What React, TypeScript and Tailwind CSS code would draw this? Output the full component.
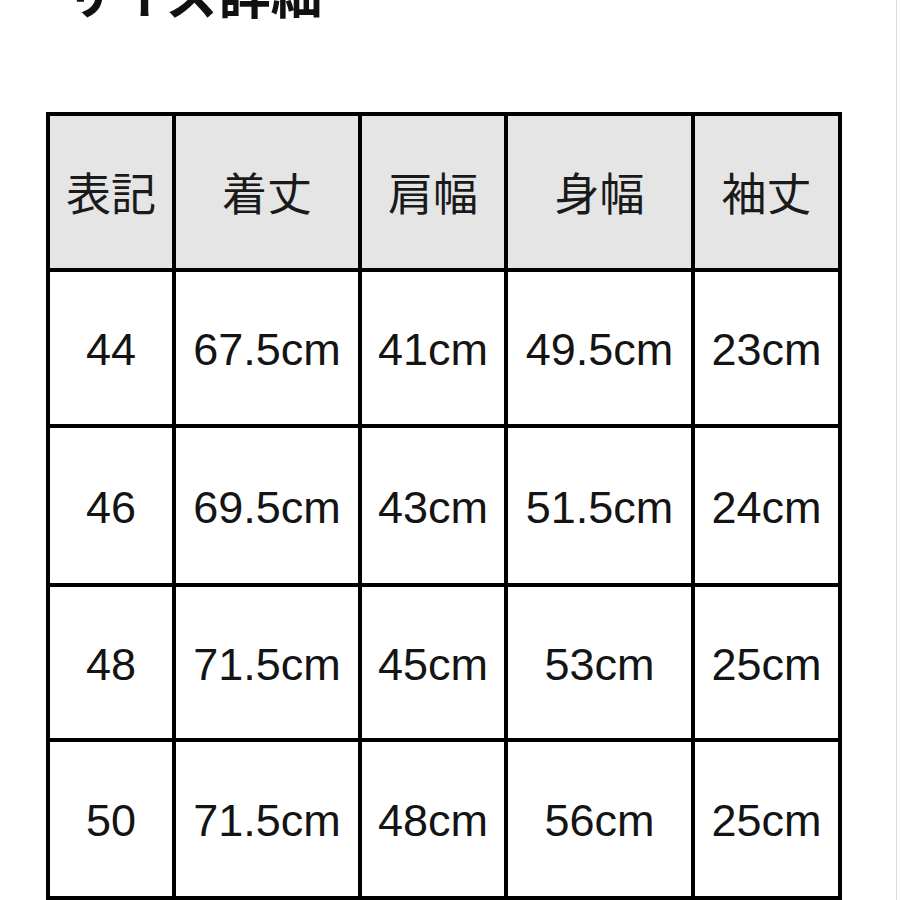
const HEADERS = ['表記', '着丈', '肩幅', '身幅', '袖丈'];

const ROWS = [
  ['44', '67.5cm', '41cm', '49.5cm', '23cm'],
  ['46', '69.5cm', '43cm', '51.5cm', '24cm'],
  ['48', '71.5cm', '45cm', '53cm', '25cm'],
  ['50', '71.5cm', '48cm', '56cm', '25cm'],
];

export default function App() {
  return (
    <div className="flex h-[900px] w-[900px] overflow-hidden bg-white">
      <div className="flex w-[896px] shrink-0 flex-col">
        {/* title is cut off by the top of the screenshot */}
        <h1 className="-mt-[34px] shrink-0 pl-[64px] text-[52px] leading-[52px] font-bold text-[#111] [font-family:'Noto_Sans_CJK_JP',sans-serif]">
          サイズ詳細
        </h1>

        <div className="ml-[46px] mt-[94px] grid w-[796px] shrink-0 grid-cols-[122px_182px_142px_183px_143px] grid-rows-[152px_152px_155px_151px_154px] gap-1 bg-black p-1">
          {HEADERS.map(h => (
            <div key={h} className="flex items-center justify-center bg-[#e5e5e5] text-[45px] text-[#1a1a1a] [font-family:'Noto_Sans_CJK_JP',sans-serif]">
              {h}
            </div>
          ))}
          {ROWS.map((row, i) =>
            row.map((cell, j) => (
              <div key={`${i}-${j}`} className="flex items-center justify-center bg-white pt-1 text-[45px] text-[#141414] [font-family:'Liberation_Sans',Arial,sans-serif]">
                {cell}
              </div>
            ))
          )}
        </div>
      </div>
      <div className="h-full w-px shrink-0 bg-[#dedede]" />
    </div>
  );
}
